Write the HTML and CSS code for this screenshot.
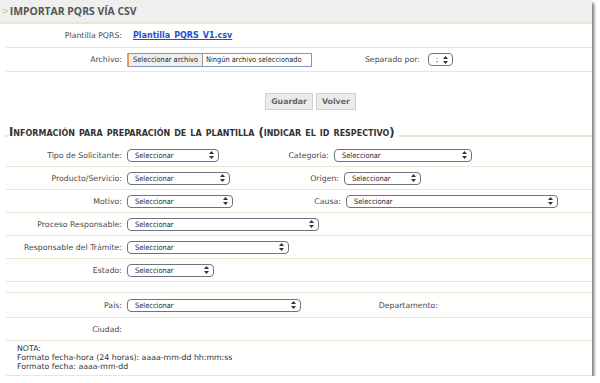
FILE: index.html
```html
<!DOCTYPE html>
<html lang="es">
<head>
  <meta charset="UTF-8">
  <title>Importar PQRS vía CSV</title>
  <link rel="stylesheet" href="styles.css">
</head>
<body>
<div class="panel">
  <div class="titlebar"><span class="arrow">&gt;</span><h1>IMPORTAR PQRS VÍA CSV</h1></div>

  <div class="row r-top">
    <span class="lbl">Plantilla PQRS:</span>
    <a class="file-link" href="#">Plantilla_PQRS_V1.csv</a>
  </div>
  <div class="row r-top">
    <span class="lbl">Archivo:</span>
    <span class="file-input"><span class="file-btn">Seleccionar archivo</span><span class="file-name">Ningún archivo seleccionado</span></span>
    <span class="lbl2 l-sep">Separado por:</span>
    <span class="sel w-sep"><span>;</span><svg width="5" height="8" viewBox="0 0 5 8"><path d="M2.5 0 L5 3 H0Z M2.5 8 L5 5 H0Z" fill="#333"/></svg></span>
  </div>

  <div class="actions">
    <button type="button">Guardar</button>
    <button type="button">Volver</button>
  </div>

  <h2 class="legend"><span>Información para preparación de la plantilla (indicar el id respectivo)</span></h2>

  <div class="row">
    <span class="lbl">Tipo de Solicitante:</span>
    <span class="sel w-92"><span>Seleccionar</span><svg width="5" height="8" viewBox="0 0 5 8"><path d="M2.5 0 L5 3 H0Z M2.5 8 L5 5 H0Z" fill="#333"/></svg></span>
    <span class="lbl2 l-cat">Categoria:</span>
    <span class="sel w-138"><span>Seleccionar</span><svg width="5" height="8" viewBox="0 0 5 8"><path d="M2.5 0 L5 3 H0Z M2.5 8 L5 5 H0Z" fill="#333"/></svg></span>
  </div>
  <div class="row">
    <span class="lbl">Producto/Servicio:</span>
    <span class="sel w-103"><span>Seleccionar</span><svg width="5" height="8" viewBox="0 0 5 8"><path d="M2.5 0 L5 3 H0Z M2.5 8 L5 5 H0Z" fill="#333"/></svg></span>
    <span class="lbl2 l-ori">Origen:</span>
    <span class="sel w-77"><span>Seleccionar</span><svg width="5" height="8" viewBox="0 0 5 8"><path d="M2.5 0 L5 3 H0Z M2.5 8 L5 5 H0Z" fill="#333"/></svg></span>
  </div>
  <div class="row">
    <span class="lbl">Motivo:</span>
    <span class="sel w-106"><span>Seleccionar</span><svg width="5" height="8" viewBox="0 0 5 8"><path d="M2.5 0 L5 3 H0Z M2.5 8 L5 5 H0Z" fill="#333"/></svg></span>
    <span class="lbl2 l-cau">Causa:</span>
    <span class="sel w-212"><span>Seleccionar</span><svg width="5" height="8" viewBox="0 0 5 8"><path d="M2.5 0 L5 3 H0Z M2.5 8 L5 5 H0Z" fill="#333"/></svg></span>
  </div>
  <div class="row">
    <span class="lbl">Proceso Responsable:</span>
    <span class="sel w-192"><span>Seleccionar</span><svg width="5" height="8" viewBox="0 0 5 8"><path d="M2.5 0 L5 3 H0Z M2.5 8 L5 5 H0Z" fill="#333"/></svg></span>
  </div>
  <div class="row">
    <span class="lbl">Responsable del Trámite:</span>
    <span class="sel w-162"><span>Seleccionar</span><svg width="5" height="8" viewBox="0 0 5 8"><path d="M2.5 0 L5 3 H0Z M2.5 8 L5 5 H0Z" fill="#333"/></svg></span>
  </div>
  <div class="row">
    <span class="lbl">Estado:</span>
    <span class="sel w-87"><span>Seleccionar</span><svg width="5" height="8" viewBox="0 0 5 8"><path d="M2.5 0 L5 3 H0Z M2.5 8 L5 5 H0Z" fill="#333"/></svg></span>
  </div>
  <div class="row r-empty"></div>
  <div class="row r-pais">
    <span class="lbl">País:</span>
    <span class="sel w-174"><span>Seleccionar</span><svg width="5" height="8" viewBox="0 0 5 8"><path d="M2.5 0 L5 3 H0Z M2.5 8 L5 5 H0Z" fill="#333"/></svg></span>
    <span class="lbl2 l-dep">Departamento:</span>
  </div>
  <div class="row">
    <span class="lbl">Ciudad:</span>
  </div>

  <div class="note">
    NOTA:<br>
    Formato fecha-hora (24 horas): aaaa-mm-dd hh:mm:ss<br>
    Formato fecha: aaaa-mm-dd
  </div>
</div>
</body>
</html>
```

FILE: styles.css
```css
body {
  margin: 0;
  background: #fff;
  font-family: "DejaVu Sans", Verdana, sans-serif;
  font-size: 7.8px;
  color: #4a4a4a;
}

.panel {
  width: 592px;
  height: 376px;
  background: #fff;
  box-shadow: 2px 3px 3px rgba(0, 0, 0, 0.55);
}

.titlebar {
  height: 22px;
  background: #efefef;
  border-bottom: 2px solid #e7e9d3;
  display: flex;
  align-items: center;
  padding-left: 2px;
}
.titlebar .arrow {
  color: #bbb;
  font-size: 8px;
  margin-right: 1px;
}
.titlebar h1 {
  margin: 0;
  font-family: "Open Sans", sans-serif;
  font-size: 10.4px;
  font-weight: bold;
  color: #555;
}

.row {
  display: flex;
  align-items: center;
  height: 22px;
  margin-left: 6px;
  border-bottom: 1px solid #e6e8d4;
}
.r-top { height: 23px; }
.r-empty { height: 10px; }
.r-pais { height: 24px; }

.lbl {
  width: 116px;
  flex: none;
  text-align: right;
  margin-right: 5px;
}
.lbl2 {
  flex: none;
  text-align: right;
  margin-right: 5px;
}
.l-cat { width: 110px; }
.l-ori { width: 109px; }
.l-cau { width: 108px; }
.l-sep { width: 108px; margin-right: 8px; }
.l-dep { width: 137px; }

.file-link {
  margin-left: 6px;
  font-weight: bold;
  font-size: 8px;
  color: #1d4fd6;
}

.sel {
  box-sizing: border-box;
  height: 13px;
  display: flex;
  align-items: center;
  justify-content: space-between;
  flex: none;
  padding: 0 4px 0 7px;
  border: 1px solid #6f747c;
  border-radius: 4px;
  background: #fff;
  font-family: "DejaVu Sans Condensed", "DejaVu Sans", sans-serif;
  font-size: 7.4px;
  color: #222;
}
.w-sep { width: 25px; }
.w-77 { width: 77px; }
.w-87 { width: 87px; }
.w-92 { width: 92px; }
.w-103 { width: 103px; }
.w-106 { width: 106px; }
.w-138 { width: 138px; }
.w-162 { width: 162px; }
.w-174 { width: 174px; }
.w-192 { width: 192px; }
.w-212 { width: 212px; }

.file-input {
  display: flex;
  width: 185px;
  height: 14px;
  box-sizing: border-box;
  border: 1px solid #7f98c2;
  border-left: 2px solid #f0a040;
  font-family: "DejaVu Sans Condensed", "DejaVu Sans", sans-serif;
  font-size: 7.4px;
  color: #222;
}
.file-btn {
  display: flex;
  align-items: center;
  padding: 0 4px;
  background: #eeeeee;
  border-right: 1px solid #9a9a9a;
}
.file-name {
  display: flex;
  align-items: center;
  padding-left: 3px;
  white-space: nowrap;
  overflow: hidden;
}

.actions {
  display: flex;
  justify-content: center;
  gap: 3px;
  padding: 21px 0 0 29px;
  height: 30px;
}
.actions button {
  height: 17px;
  padding: 0 5px;
  background: #ebebeb;
  border: 1px solid #cfcfcf;
  border-radius: 0;
  font-family: "DejaVu Sans", sans-serif;
  font-size: 7.8px;
  font-weight: bold;
  color: #666;
}

.legend {
  display: flex;
  align-items: center;
  margin: 0;
  height: 21px;
  padding-left: 5px;
  font-size: 11.6px;
  font-variant: small-caps;
  font-weight: bold;
  color: #333;
}
.legend::before {
  content: "";
  width: 4px;
  border-top: 2px solid #e5e7d0;
  margin-top: 4px;
}
.legend::after {
  content: "";
  flex: 1;
  border-top: 2px solid #e5e7d0;
  margin-top: 4px;
}
.legend span {
  white-space: nowrap;
  padding-right: 4px;
  margin-top: -3px;
}

.note {
  margin-left: 6px;
  padding: 3px 0 0 11px;
  height: 31px;
  line-height: 9px;
  color: #333;
  border-bottom: 1px solid #e6e8d4;
}
```
